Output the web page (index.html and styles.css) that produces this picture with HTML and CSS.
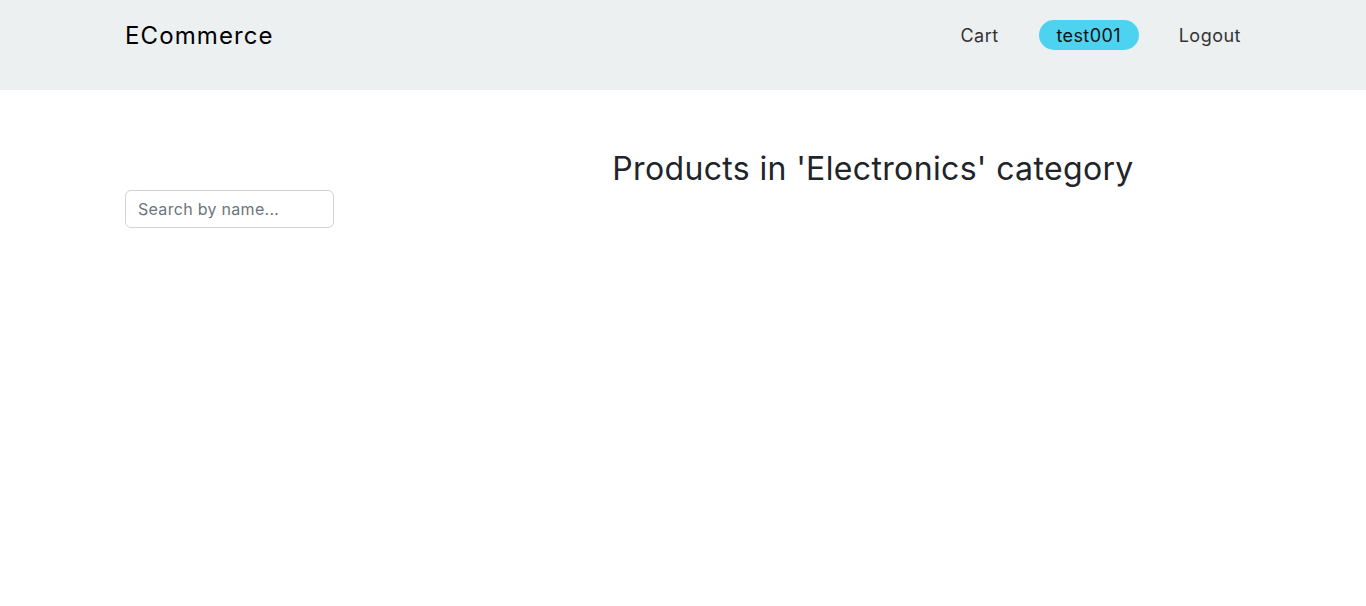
FILE: index.html
```html
<!DOCTYPE html>
<html lang="en">
<head>
<meta charset="utf-8">
<title>ECommerce</title>
<link rel="stylesheet" href="styles.css">
</head>
<body>
<header class="navbar">
  <div class="container nav-inner">
    <a class="brand" href="#">ECommerce</a>
    <nav class="nav-links">
      <a class="nav-link" href="#">Cart</a>
      <span class="user-pill">test001</span>
      <a class="nav-link" href="#">Logout</a>
    </nav>
  </div>
</header>
<main class="container content">
  <div class="col-side">
    <input class="search" type="text" placeholder="Search by name...">
  </div>
  <div class="col-main">
    <h2 class="title">Products in 'Electronics' category</h2>
  </div>
</main>
</body>
</html>
```

FILE: styles.css
```css
* { box-sizing: border-box; }
body {
  margin: 0;
  font-family: Inter, "Noto Sans", sans-serif;
  color: #212529;
  background: #fff;
}
.container {
  width: 1140px;
  margin: 0 auto;
  padding: 0 12px;
}
.navbar {
  background: #ecf0f1;
  height: 90px;
  padding-top: 20px;
}
.nav-inner {
  display: flex;
  align-items: center;
  justify-content: space-between;
  height: 30px;
}
.brand {
  font-size: 24px;
  letter-spacing: 1.1px;
  color: #000;
  text-decoration: none;
}
.nav-links {
  display: flex;
  align-items: center;
  gap: 40px;
}
.nav-link {
  font-size: 18px;
  letter-spacing: 0.5px;
  color: #333;
  text-decoration: none;
}
.user-pill {
  display: inline-flex;
  align-items: center;
  justify-content: center;
  width: 100px;
  height: 30px;
  border-radius: 15px;
  background: #4dd2f0;
  font-size: 18px;
  letter-spacing: 0.4px;
  color: #111;
}
.content {
  display: flex;
  padding-top: 60px;
}
.col-side {
  width: 368px;
  padding-top: 40px;
}
.col-main {
  flex: 1;
  padding-left: 12px;
  text-align: center;
}
.search {
  width: 209px;
  height: 38px;
  border: 1px solid #ced4da;
  border-radius: 6px;
  padding: 6px 12px;
  font-family: inherit;
  font-size: 16px;
  letter-spacing: 0.3px;
  color: #212529;
}
.search::placeholder { color: #6c757d; }
.title {
  margin: 0;
  font-size: 32px;
  font-weight: 400;
  letter-spacing: 0.35px;
  line-height: 1.2;
}
```
